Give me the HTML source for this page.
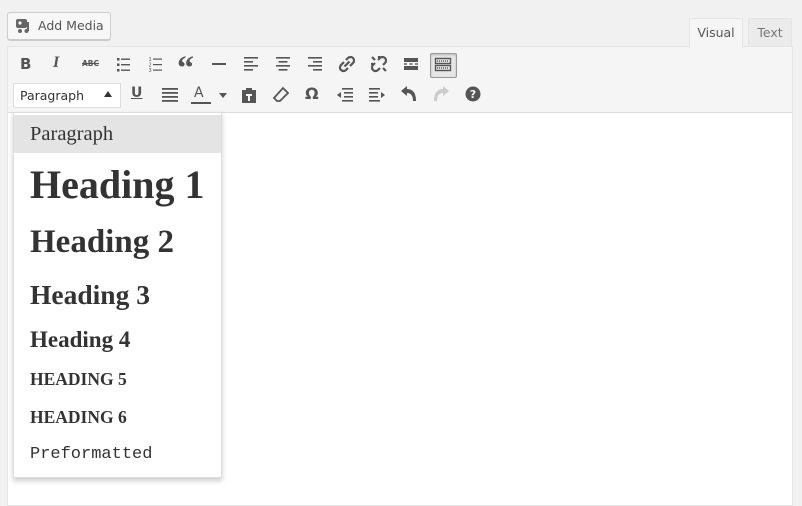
<!DOCTYPE html>
<html><head><meta charset="utf-8"><style>
*{margin:0;padding:0;box-sizing:border-box}
body{width:802px;height:498px;background:#f1f1f1;position:relative;overflow:hidden;font-family:"Liberation Sans",sans-serif;color:#555}
.abs{position:absolute}
.btn{left:7px;top:12px;width:104px;height:28px;border:1px solid #ccc;border-radius:3px;background:#f7f7f7;box-shadow:0 1px 0 #ccc}
.btn span{position:absolute;left:30px;top:5px;color:#555;font-family:"DejaVu Sans",sans-serif;font-size:12.5px}
.tab{top:18px;height:29px;font-family:"DejaVu Sans",sans-serif;font-size:12.5px;padding-top:6px;text-align:center;border:1px solid #e5e5e5;border-bottom:none}
.editor{left:7px;top:46px;width:786px;height:460px;border:1px solid #e5e5e5;background:#fff}
.tb{left:8px;top:47px;width:784px;height:66px;background:#f5f5f5;border-bottom:1px solid #dcdcdc}
svg.i{position:absolute;width:20px;height:20px}
.dd{left:13px;top:112px;width:209px;height:366px;background:#fff;border:1px solid #ddd;box-shadow:0 3px 5px rgba(0,0,0,.2)}
.it{position:absolute;left:30px;font-family:"Liberation Serif",serif;font-weight:bold;color:#333;white-space:nowrap;line-height:1}
</style></head><body>
<div class="abs btn">
<svg class="i" style="left:7px;top:4px;width:18px;height:18px" viewBox="0 0 18 18"><rect x="1" y="2" width="11" height="9" rx="2" fill="#666"/><circle cx="5" cy="6" r="1.6" fill="#f7f7f7"/><path d="M13 5v9" stroke="#666" stroke-width="2"/><circle cx="11.5" cy="14" r="2" fill="#666"/><circle cx="5" cy="14" r="2" fill="#666"/></svg>
<span>Add Media</span></div>
<div class="abs tab" style="left:689px;width:54px;background:#f5f5f5;color:#555;height:30px;z-index:3">Visual</div>
<div class="abs tab" style="left:748px;width:44px;background:#ebebeb;color:#777">Text</div>
<div class="abs editor"></div>
<div class="abs tb"></div>
<!-- row1 -->
<div class="abs" style="left:20px;top:55px;font:bold 15px 'DejaVu Sans',sans-serif;color:#555">B</div>
<div class="abs" style="left:53px;top:54px;font:italic bold 16px 'Liberation Serif',serif;color:#555">I</div>
<div class="abs" style="left:82px;top:59px;font:bold 7.5px 'DejaVu Sans',sans-serif;color:#555;text-decoration:line-through">ABC</div>
<svg class="i" style="left:114px;top:55px" viewBox="0 0 20 20" fill="#555"><rect x="3" y="3" width="2.5" height="2.5"/><rect x="3" y="8.5" width="2.5" height="2.5"/><rect x="3" y="14" width="2.5" height="2.5"/><rect x="7" y="3.5" width="9" height="1.4"/><rect x="7" y="9" width="9" height="1.4"/><rect x="7" y="14.5" width="9" height="1.4"/></svg>
<svg class="i" style="left:146px;top:55px" viewBox="0 0 20 20" fill="#555"><text x="2.5" y="6" font-size="5" font-family="DejaVu Sans">1</text><text x="2.5" y="11.5" font-size="5" font-family="DejaVu Sans">2</text><text x="2.5" y="17" font-size="5" font-family="DejaVu Sans">3</text><rect x="7" y="3.5" width="9" height="1.2"/><rect x="7" y="9" width="9" height="1.2"/><rect x="7" y="14.5" width="9" height="1.2"/></svg>
<div class="abs" style="left:177px;top:52px;font:bold 34px 'Liberation Serif',serif;color:#555;line-height:1">“</div>
<div class="abs" style="left:212px;top:63px;width:14px;height:2px;background:#555"></div>
<svg class="i" style="left:241px;top:54px" viewBox="0 0 20 20" fill="#555"><rect x="3" y="3" width="14" height="1.6"/><rect x="3" y="7" width="9" height="1.6"/><rect x="3" y="11" width="14" height="1.6"/><rect x="3" y="15" width="9" height="1.6"/></svg>
<svg class="i" style="left:273px;top:54px" viewBox="0 0 20 20" fill="#555"><rect x="3" y="3" width="14" height="1.6"/><rect x="5.5" y="7" width="9" height="1.6"/><rect x="3" y="11" width="14" height="1.6"/><rect x="5.5" y="15" width="9" height="1.6"/></svg>
<svg class="i" style="left:305px;top:54px" viewBox="0 0 20 20" fill="#555"><rect x="3" y="3" width="14" height="1.6"/><rect x="8" y="7" width="9" height="1.6"/><rect x="3" y="11" width="14" height="1.6"/><rect x="8" y="15" width="9" height="1.6"/></svg>
<svg class="i" style="left:337px;top:54px" viewBox="0 0 20 20" fill="none" stroke="#555" stroke-width="2.2"><path d="M9 6l2-2a3 3 0 0 1 5 5l-3 3M11 14l-2 2a3 3 0 0 1-5-5l3-3M7.5 12.5l5-5"/></svg>
<svg class="i" style="left:369px;top:54px" viewBox="0 0 20 20" fill="none" stroke="#555" stroke-width="2.2"><path d="M9 6l2-2a3 3 0 0 1 5 5l-2 2M11 14l-2 2a3 3 0 0 1-5-5l2-2M3 3l3 3M14 14l3 3M10 2v2M2 10h2"/></svg>
<svg class="i" style="left:401px;top:54px" viewBox="0 0 20 20" fill="#555"><rect x="3" y="4" width="14" height="4"/><rect x="3" y="12" width="14" height="4"/><rect x="3" y="9.3" width="3" height="1.4"/><rect x="8.5" y="9.3" width="3" height="1.4"/><rect x="14" y="9.3" width="3" height="1.4"/></svg>
<div class="abs" style="left:430px;top:53px;width:27px;height:25px;border:1px solid #999;border-radius:2px;background:#e6e6e6;box-shadow:inset 0 1px 2px rgba(0,0,0,.2)"></div>
<svg class="i" style="left:433px;top:55px" viewBox="0 0 20 20" fill="none" stroke="#555" stroke-width="1.4"><rect x="2.5" y="3.5" width="15" height="5"/><rect x="2.5" y="10.5" width="15" height="5"/><path d="M4 6h12M4 13h12" stroke-dasharray="1 1"/></svg>
<!-- row2 -->
<div class="abs" style="left:13px;top:83px;width:108px;height:25px;background:#fff;border:1px solid #ddd"></div>
<div class="abs" style="left:20px;top:88px;font:12.5px 'DejaVu Sans',sans-serif;color:#333">Paragraph</div>
<div class="abs" style="left:104px;top:91px;width:0;height:0;border-left:4px solid transparent;border-right:4px solid transparent;border-bottom:6px solid #333"></div>
<div class="abs" style="left:131px;top:85px;font:bold 14px 'DejaVu Sans',sans-serif;color:#555;text-decoration:underline">U</div>
<svg class="i" style="left:160px;top:85px" viewBox="0 0 20 20" fill="#555"><rect x="2" y="3" width="16" height="1.8"/><rect x="2" y="7" width="16" height="1.8"/><rect x="2" y="11" width="16" height="1.8"/><rect x="2" y="15" width="16" height="1.8"/></svg>
<div class="abs" style="left:194px;top:85px;font:14px 'DejaVu Sans',sans-serif;color:#555">A</div>
<div class="abs" style="left:191px;top:102px;width:20px;height:2px;background:#555"></div>
<div class="abs" style="left:219px;top:93px;border-left:4px solid transparent;border-right:4px solid transparent;border-top:5px solid #555"></div>
<svg class="i" style="left:239px;top:85px" viewBox="0 0 20 20" fill="#555"><path d="M3 5h4V3h6v2h4v13H3z"/><path d="M7 9h6v2h-2v5H9v-5H7z" fill="#f5f5f5"/></svg>
<svg class="i" style="left:271px;top:85px" viewBox="0 0 20 20" fill="none" stroke="#555" stroke-width="1.8"><path d="M12 3l5 5-8 8H6l-3-3z"/></svg>
<div class="abs" style="left:305px;top:84px;font:bold 16px 'DejaVu Sans',sans-serif;color:#555">Ω</div>
<svg class="i" style="left:335px;top:85px" viewBox="0 0 20 20" fill="#555"><rect x="7" y="3" width="11" height="1.6"/><rect x="9" y="7" width="9" height="1.6"/><rect x="9" y="11" width="9" height="1.6"/><rect x="7" y="15" width="11" height="1.6"/><path d="M2 10l4-3v6z"/></svg>
<svg class="i" style="left:367px;top:85px" viewBox="0 0 20 20" fill="#555"><rect x="2" y="3" width="11" height="1.6"/><rect x="2" y="7" width="9" height="1.6"/><rect x="2" y="11" width="9" height="1.6"/><rect x="2" y="15" width="11" height="1.6"/><path d="M18 10l-4-3v6z"/></svg>
<svg class="i" style="left:399px;top:84px" viewBox="0 0 20 20" fill="#555"><path d="M2 7l6-5v3c6 0 9 4 9 12h-3c0-5-2-8-6-8v3z"/></svg>
<svg class="i" style="left:431px;top:84px" viewBox="0 0 20 20" fill="#ccc"><path d="M18 7l-6-5v3c-6 0-9 4-9 12h3c0-5 2-8 6-8v3z"/></svg>
<svg class="i" style="left:463px;top:84px" viewBox="0 0 20 20"><circle cx="10" cy="10" r="7.5" fill="#555"/><text x="10" y="14" text-anchor="middle" font-size="11" font-weight="bold" font-family="DejaVu Sans" fill="#f5f5f5">?</text></svg>
<!-- dropdown -->
<div class="abs dd">
<div style="position:absolute;left:0;top:2px;width:207px;height:38px;background:#e4e4e4"></div>
</div>
<div class="it" style="top:124px;font-size:20.5px;font-weight:normal">Paragraph</div>
<div class="it" style="top:165px;font-size:40px">Heading 1</div>
<div class="it" style="top:226px;font-size:33px">Heading 2</div>
<div class="it" style="top:281px;font-size:27.5px">Heading 3</div>
<div class="it" style="top:328px;font-size:23px">Heading 4</div>
<div class="it" style="top:371px;font-size:17.5px">HEADING 5</div>
<div class="it" style="top:409px;font-size:17.5px">HEADING 6</div>
<div class="it" style="top:445px;font:17px 'Liberation Mono',monospace;color:#333">Preformatted</div>
</body></html>
